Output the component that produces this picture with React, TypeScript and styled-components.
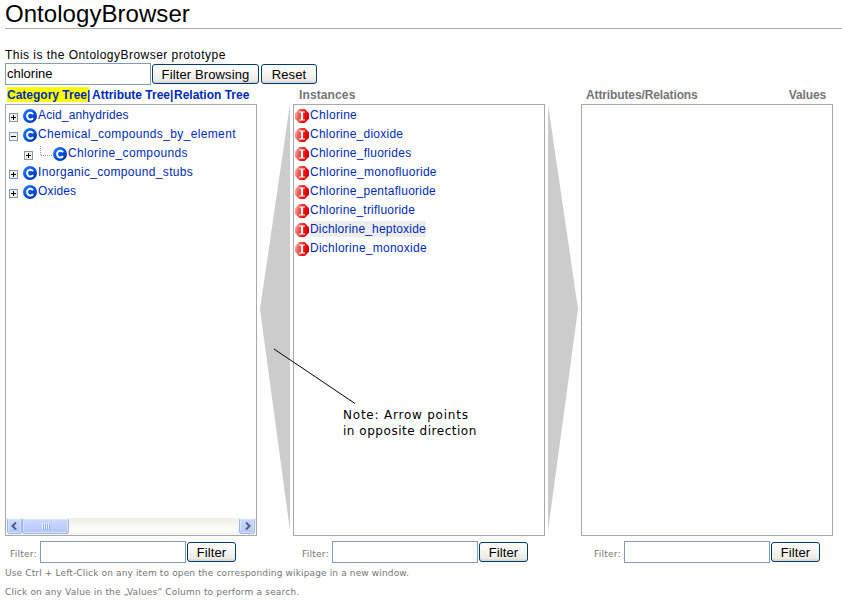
import React from "react";
import styled, { createGlobalStyle } from "styled-components";

const GlobalStyle = createGlobalStyle`
  * { box-sizing: border-box; }
  html, body { margin: 0; padding: 0; background: #fff; }
  body { font-family: "Liberation Sans", Arial, sans-serif; overflow: hidden; }
`;

const Page = styled.main`
  position: relative;
  width: 842px;
  height: 601px;
  padding-left: 5px;
  background: #fff;
  color: #000;
  white-space: nowrap;
`;

const Title = styled.h1`
  margin: 0;
  height: 29px;
  border-bottom: 1px solid #aaa;
  font-size: 24px;
  line-height: 28px;
  font-weight: 400;
  letter-spacing: 0.05px;
`;

const Intro = styled.p`
  margin: 18px 0 0;
  height: 16px;
  font-size: 12px;
  line-height: 16px;
  letter-spacing: 0.47px;
`;

const SearchRow = styled.div`
  display: flex;
  align-items: center;
  height: 22px;
`;

const TextField = styled.input`
  width: 146px;
  height: 22px;
  margin: 0 1px 0 0;
  padding: 0 1px 2px 1px;
  border: 1px solid #7f9db9;
  border-radius: 0;
  outline: none;
  background: #fff;
  color: #000;
  font: 13px "Liberation Sans", Arial, sans-serif;
`;

const Button = styled.button<{ $width: number; $gap?: number }>`
  width: ${(p) => p.$width}px;
  height: 20px;
  margin: 0 ${(p) => p.$gap ?? 0}px 0 0;
  padding: 1px 0 0;
  border: 1px solid #003c74;
  border-radius: 3px;
  background: linear-gradient(#fff 0%, #f4f3ee 55%, #ecebe5 85%, #d6d0c5 100%);
  color: #000;
  font: 13px/17px "Liberation Sans", Arial, sans-serif;
  letter-spacing: 0.12px;
`;

const Headings = styled.div`
  display: grid;
  grid-template-columns: 288px 288px 252px;
  height: 19px;
  padding-top: 2px;
  font-size: 12px;
  line-height: 16px;
  font-weight: 700;
`;

const Tabs = styled.nav`
  display: flex;
  padding-left: 2px;
  color: #002bb8;
`;

const Tab = styled.a<{ $active?: boolean; $width: number; $indent?: number }>`
  width: ${(p) => p.$width}px;
  height: 15px;
  padding-left: ${(p) => p.$indent ?? 0}px;
  background: ${(p) => (p.$active ? "#ff0" : "transparent")};
`;

const Heading = styled.div<{ $indent: number; $spacing: number }>`
  display: flex;
  justify-content: space-between;
  padding: 0 7px 0 ${(p) => p.$indent}px;
  color: #757575;
  letter-spacing: ${(p) => p.$spacing}px;
`;

const Columns = styled.div`
  display: grid;
  grid-template-columns: 252px 36px 252px 36px 252px;
  height: 432px;
`;

const Panel = styled.section`
  display: flex;
  flex-direction: column;
  height: 432px;
  border: 1px solid #a9a9a9;
  background: #fff;
`;

const List = styled.ul`
  flex: 1;
  margin: 0;
  padding: 1px 0 0;
  list-style: none;
`;

const Row = styled.li<{ $indent: number }>`
  display: flex;
  align-items: flex-start;
  height: 19px;
  padding-left: ${(p) => p.$indent}px;
  color: #002bb8;
  font-size: 12px;
`;

const Label = styled.a<{ $spacing: number; $marked?: boolean }>`
  height: 16px;
  line-height: 16px;
  margin-top: 1px;
  letter-spacing: ${(p) => p.$spacing}px;
  background: ${(p) => (p.$marked ? "#ededed" : "transparent")};
`;

const IconSlot = styled.svg<{ $top: number; $right?: number }>`
  flex: none;
  display: block;
  margin: ${(p) => p.$top}px ${(p) => p.$right ?? 0}px 0 0;
`;

const ArrowSlot = styled.svg`
  display: block;
`;

const ScrollBar = styled.div`
  display: flex;
  height: 17px;
  padding: 0 1px 1px;
  background: linear-gradient(#efede6, #fefefb 70%, #f3f2ec);
`;

const ScrollPiece = styled.div<{ $width: number; $push?: boolean }>`
  display: flex;
  align-items: center;
  justify-content: center;
  width: ${(p) => p.$width}px;
  height: 16px;
  margin-left: ${(p) => (p.$push ? "auto" : "0")};
  border: 1px solid #9db7ec;
  border-top-color: #fff;
  border-radius: 3px;
  background: linear-gradient(#cbdafe, #bccdfc 70%, #b0c5f8);
  box-shadow: inset 0 0 0 1px #d8e4ff;
`;

const Filters = styled.div`
  display: grid;
  grid-template-columns: repeat(3, 292px);
  margin-top: 5px;
`;

const FilterBox = styled.label`
  display: flex;
  align-items: center;
  height: 22px;
  padding-left: 5px;
`;

const FilterLabel = styled.span`
  width: 30px;
  padding-top: 3px;
  color: #757575;
  font: 9px/12px "DejaVu Sans", Verdana, sans-serif;
  letter-spacing: 0.25px;
`;

const HelpText = styled.div`
  padding-top: 1px;
`;

const Help = styled.p<{ $spacing: number }>`
  margin: 0;
  height: 19px;
  color: #757575;
  font: 9px/19px "DejaVu Sans", Verdana, sans-serif;
  letter-spacing: ${(p) => p.$spacing}px;
`;

const Annotation = styled.aside`
  position: absolute;
  left: 343px;
  top: 407px;
  font: 12px/16px "DejaVu Sans", Verdana, sans-serif;
`;

const NoteLine = styled.div<{ $spacing: number }>`
  letter-spacing: ${(p) => p.$spacing}px;
`;

const Pointer = styled.svg`
  position: absolute;
  left: 273px;
  top: 348px;
`;

function Expander({ open }: { open?: boolean }) {
  return (
    <IconSlot $top={7} $right={5} width="9" height="9" viewBox="0 0 9 9" shapeRendering="crispEdges">
      <rect x=".5" y=".5" width="8" height="8" fill="#f1f0eb" stroke="#8798ad" />
      <path d={open ? "M2 4.5h5" : "M2 4.5h5M4.5 2v5"} stroke="#000" />
    </IconSlot>
  );
}

function CategoryIcon() {
  return (
    <IconSlot $top={3} $right={1} width="14" height="14" viewBox="0 0 14 14">
      <defs>
        <linearGradient id="category" x1="0" y1="0" x2="1" y2="1">
          <stop offset="0" stopColor="#2f86ff" />
          <stop offset=".5" stopColor="#0552e2" />
          <stop offset="1" stopColor="#002d9c" />
        </linearGradient>
      </defs>
      <circle cx="7" cy="7" r="7" fill="url(#category)" />
      <path d="M10 5.3A3.2 3.4 0 1 0 10 8.9" fill="none" stroke="#fff" strokeWidth="2" />
    </IconSlot>
  );
}

function InstanceIcon() {
  return (
    <IconSlot $top={3} $right={1} width="14" height="14" viewBox="0 0 14 14">
      <defs>
        <linearGradient id="instance" x1="0" y1="0" x2="1" y2=".25">
          <stop offset="0" stopColor="#fbc4c0" />
          <stop offset=".35" stopColor="#ef5d57" />
          <stop offset=".7" stopColor="#f51512" />
          <stop offset="1" stopColor="#d80000" />
        </linearGradient>
      </defs>
      <path d="M4.5 0h5L14 4.5v5L9.500 14h-5L0 9.500v-5z" fill="url(#instance)" stroke="url(#instance)" strokeWidth=".4" />
      <path d="M4 3h6M4 11h6" stroke="#fff" strokeWidth="1" />
      <path d="M7 3v8" stroke="#fff" strokeWidth="2.200" />
    </IconSlot>
  );
}

function Branch() {
  return (
    <IconSlot $top={0} width="15" height="19" viewBox="0 0 15 19" shapeRendering="crispEdges">
      <path d="M2.5 2v9M3 11.5h11" fill="none" stroke="#8f8f8f" strokeDasharray="1 1" />
    </IconSlot>
  );
}

function Arrow({ left }: { left?: boolean }) {
  return (
    <ArrowSlot width="36" height="432" viewBox="0 0 36 432">
      <path d={left ? "M33 0V427L3 205z" : "M3 0V427L33 205z"} fill="#ccc" />
    </ArrowSlot>
  );
}

const categories = [
  { name: "Acid_anhydrides", spacing: 0.13 },
  { name: "Chemical_compounds_by_element", spacing: 0.36, open: true },
  { name: "Chlorine_compounds", spacing: 0.36, child: true },
  { name: "Inorganic_compound_stubs", spacing: 0.32 },
  { name: "Oxides", spacing: 0.15 },
];

const instances = [
  { name: "Chlorine", spacing: 0.3 },
  { name: "Chlorine_dioxide", spacing: 0.24 },
  { name: "Chlorine_fluorides", spacing: 0.26 },
  { name: "Chlorine_monofluoride", spacing: 0.29 },
  { name: "Chlorine_pentafluoride", spacing: 0.24 },
  { name: "Chlorine_trifluoride", spacing: 0.22 },
  { name: "Dichlorine_heptoxide", spacing: 0.19, marked: true },
  { name: "Dichlorine_monoxide", spacing: 0.25 },
];

export default function App() {
  return (
    <>
      <GlobalStyle />
      <Page>
        <Title>OntologyBrowser</Title>
        <Intro>This is the OntologyBrowser prototype</Intro>
        <SearchRow>
          <TextField defaultValue="chlorine" />
          <Button $width={107} $gap={2}>Filter Browsing</Button>
          <Button $width={56}>Reset</Button>
        </SearchRow>
        <Headings>
          <Tabs>
            <Tab $active $width={82}>Category Tree|</Tab>
            <Tab $width={85} $indent={3}>Attribute Tree|</Tab>
            <Tab $width={80}>Relation Tree</Tab>
          </Tabs>
          <Heading $indent={6} $spacing={0.12}><span>Instances</span></Heading>
          <Heading $indent={5} $spacing={-0.12}><span>Attributes/Relations</span><span>Values</span></Heading>
        </Headings>
        <Columns>
          <Panel>
            <List>
              {categories.map((c) => (
                <Row key={c.name} $indent={c.child ? 18 : 3}>
                  <Expander open={c.open} />
                  {c.child && <Branch />}
                  <CategoryIcon />
                  <Label $spacing={c.spacing}>{c.name}</Label>
                </Row>
              ))}
            </List>
            <ScrollBar>
              <ScrollPiece $width={15}>
                <svg width="7" height="8" viewBox="0 0 7 8"><path d="M5 .5 1.5 4 5 7.5" fill="none" stroke="#4d6185" strokeWidth="2" /></svg>
              </ScrollPiece>
              <ScrollPiece $width={47}>
                <svg width="8" height="7" viewBox="0 0 8 7"><path d="M.5 0v6M2.5 0v6M4.5 0v6M6.5 0v6" stroke="#eef4fe" /><path d="M1.5 1v6M3.5 1v6M5.5 1v6M7.5 1v6" stroke="#8cb0f8" /></svg>
              </ScrollPiece>
              <ScrollPiece $width={16} $push>
                <svg width="7" height="8" viewBox="0 0 7 8"><path d="M2 .5 5.5 4 2 7.5" fill="none" stroke="#4d6185" strokeWidth="2" /></svg>
              </ScrollPiece>
            </ScrollBar>
          </Panel>
          <Arrow left />
          <Panel>
            <List>
              {instances.map((i) => (
                <Row key={i.name} $indent={1}>
                  <InstanceIcon />
                  <Label $spacing={i.spacing} $marked={i.marked}>{i.name}</Label>
                </Row>
              ))}
            </List>
          </Panel>
          <Arrow />
          <Panel />
        </Columns>
        <Filters>
          {[0, 1, 2].map((n) => (
            <FilterBox key={n}>
              <FilterLabel>Filter:</FilterLabel>
              <TextField />
              <Button $width={49}>Filter</Button>
            </FilterBox>
          ))}
        </Filters>
        <HelpText>
          <Help $spacing={0.14}>Use Ctrl + Left-Click on any item to open the corresponding wikipage in a new window.</Help>
          <Help $spacing={0.18}>Click on any Value in the „Values“ Column to perform a search.</Help>
        </HelpText>
        <Pointer width="84" height="58" viewBox="0 0 84 58">
          <path d="M1 1 82 55.500" stroke="#000" strokeWidth="1" />
        </Pointer>
        <Annotation>
          <NoteLine $spacing={0.78}>Note: Arrow points</NoteLine>
          <NoteLine $spacing={0.53}>in opposite direction</NoteLine>
        </Annotation>
      </Page>
    </>
  );
}
